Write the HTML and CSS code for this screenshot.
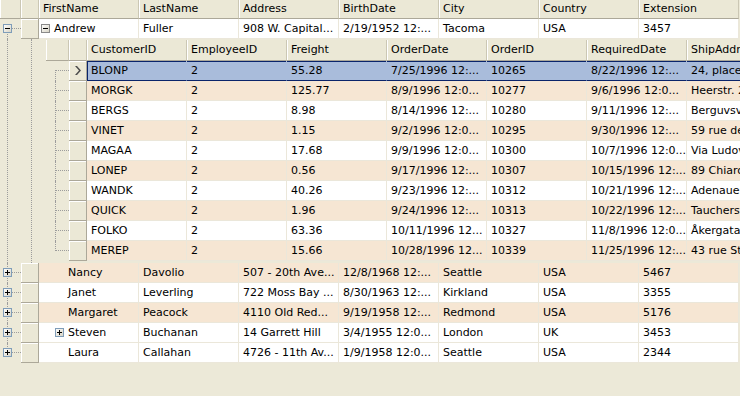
FILE: index.html
```html
<!DOCTYPE html>
<html lang="en">
<head>
    <meta charset="UTF-8">
    <title>Employees Grid</title>
    <link rel="stylesheet" href="styles.css">
</head>
<body>
    <svg class="defs" width="0" height="0">
        <defs>
            <linearGradient id="expfill" x1="0" y1="0" x2="1" y2="1">
                <stop offset="0" stop-color="#ffffff"/>
                <stop offset="1" stop-color="#d6d2c2"/>
            </linearGradient>
        </defs>
    </svg>
    <div class="grid">
        <div class="head">
            <div class="head__tree"></div>
            <div class="head__ind"></div>
            <div class="head__cell">FirstName</div>
            <div class="head__cell">LastName</div>
            <div class="head__cell">Address</div>
            <div class="head__cell">BirthDate</div>
            <div class="head__cell">City</div>
            <div class="head__cell">Country</div>
            <div class="head__cell">Extension</div>
        </div>

        <div class="row">
            <div class="tree tree--first">
                <svg class="exp" viewBox="0 0 9 9"><rect x="0.5" y="0.5" width="8" height="8" fill="url(#expfill)" stroke="#7f9db9"/><rect x="2" y="4" width="5" height="1"/></svg>
            </div>
            <div class="ind"></div>
            <div class="cell cell--name">
                <svg class="exp exp--inner" viewBox="0 0 9 9"><rect x="0.5" y="0.5" width="8" height="8" fill="url(#expfill)" stroke="#8a8a8a"/><rect x="2" y="4" width="5" height="1"/></svg>Andrew
            </div>
            <div class="cell">Fuller</div>
            <div class="cell">908 W. Capital...</div>
            <div class="cell">2/19/1952 12:...</div>
            <div class="cell">Tacoma</div>
            <div class="cell">USA</div>
            <div class="cell">3457</div>
        </div>

        <div class="detail">
            <div class="detail__gutter"></div>
            <div class="detail__body">
                <div class="head head--child">
                    <div class="head__tree head__tree--child"></div>
                    <div class="head__ind"></div>
                    <div class="head__cell">CustomerID</div>
                    <div class="head__cell">EmployeeID</div>
                    <div class="head__cell">Freight</div>
                    <div class="head__cell">OrderDate</div>
                    <div class="head__cell">OrderID</div>
                    <div class="head__cell">RequiredDate</div>
                    <div class="head__cell">ShipAddress</div>
                </div>

                <div class="row row--sel">
                    <div class="tree tree--child tree--first"></div>
                    <div class="ind">
                        <svg class="chevron" width="6" height="9" viewBox="0 0 6 9"><path d="M0 0h2l4 4.5-4 4.5h-2l4-4.5z" fill="#4c4c4c"/></svg>
                    </div>
                    <div class="cell">BLONP</div>
                    <div class="cell">2</div>
                    <div class="cell">55.28</div>
                    <div class="cell">7/25/1996 12:...</div>
                    <div class="cell">10265</div>
                    <div class="cell">8/22/1996 12:...</div>
                    <div class="cell">24, place Kléber</div>
                </div>
                <div class="row row--alt">
                    <div class="tree tree--child"></div>
                    <div class="ind"></div>
                    <div class="cell">MORGK</div>
                    <div class="cell">2</div>
                    <div class="cell">125.77</div>
                    <div class="cell">8/9/1996 12:0...</div>
                    <div class="cell">10277</div>
                    <div class="cell">9/6/1996 12:0...</div>
                    <div class="cell">Heerstr. 22</div>
                </div>
                <div class="row">
                    <div class="tree tree--child"></div>
                    <div class="ind"></div>
                    <div class="cell">BERGS</div>
                    <div class="cell">2</div>
                    <div class="cell">8.98</div>
                    <div class="cell">8/14/1996 12:...</div>
                    <div class="cell">10280</div>
                    <div class="cell">9/11/1996 12:...</div>
                    <div class="cell">Berguvsvägen 8</div>
                </div>
                <div class="row row--alt">
                    <div class="tree tree--child"></div>
                    <div class="ind"></div>
                    <div class="cell">VINET</div>
                    <div class="cell">2</div>
                    <div class="cell">1.15</div>
                    <div class="cell">9/2/1996 12:0...</div>
                    <div class="cell">10295</div>
                    <div class="cell">9/30/1996 12:...</div>
                    <div class="cell">59 rue de l'Abbaye</div>
                </div>
                <div class="row">
                    <div class="tree tree--child"></div>
                    <div class="ind"></div>
                    <div class="cell">MAGAA</div>
                    <div class="cell">2</div>
                    <div class="cell">17.68</div>
                    <div class="cell">9/9/1996 12:0...</div>
                    <div class="cell">10300</div>
                    <div class="cell">10/7/1996 12:0...</div>
                    <div class="cell">Via Ludovico il Moro 22</div>
                </div>
                <div class="row row--alt">
                    <div class="tree tree--child"></div>
                    <div class="ind"></div>
                    <div class="cell">LONEP</div>
                    <div class="cell">2</div>
                    <div class="cell">0.56</div>
                    <div class="cell">9/17/1996 12:...</div>
                    <div class="cell">10307</div>
                    <div class="cell">10/15/1996 12:...</div>
                    <div class="cell">89 Chiaroscuro Rd.</div>
                </div>
                <div class="row">
                    <div class="tree tree--child"></div>
                    <div class="ind"></div>
                    <div class="cell">WANDK</div>
                    <div class="cell">2</div>
                    <div class="cell">40.26</div>
                    <div class="cell">9/23/1996 12:...</div>
                    <div class="cell">10312</div>
                    <div class="cell">10/21/1996 12:...</div>
                    <div class="cell">Adenauerallee 900</div>
                </div>
                <div class="row row--alt">
                    <div class="tree tree--child"></div>
                    <div class="ind"></div>
                    <div class="cell">QUICK</div>
                    <div class="cell">2</div>
                    <div class="cell">1.96</div>
                    <div class="cell">9/24/1996 12:...</div>
                    <div class="cell">10313</div>
                    <div class="cell">10/22/1996 12:...</div>
                    <div class="cell">Taucherstraße 10</div>
                </div>
                <div class="row">
                    <div class="tree tree--child"></div>
                    <div class="ind"></div>
                    <div class="cell">FOLKO</div>
                    <div class="cell">2</div>
                    <div class="cell">63.36</div>
                    <div class="cell">10/11/1996 12...</div>
                    <div class="cell">10327</div>
                    <div class="cell">11/8/1996 12:0...</div>
                    <div class="cell">Åkergatan 24</div>
                </div>
                <div class="row row--alt">
                    <div class="tree tree--child tree--last"></div>
                    <div class="ind"></div>
                    <div class="cell">MEREP</div>
                    <div class="cell">2</div>
                    <div class="cell">15.66</div>
                    <div class="cell">10/28/1996 12...</div>
                    <div class="cell">10339</div>
                    <div class="cell">11/25/1996 12:...</div>
                    <div class="cell">43 rue St. Laurent</div>
                </div>
            </div>
        </div>

        <div class="row row--alt">
            <div class="tree">
                <svg class="exp" viewBox="0 0 9 9"><rect x="0.5" y="0.5" width="8" height="8" fill="url(#expfill)" stroke="#7f9db9"/><rect x="2" y="4" width="5" height="1"/><rect x="4" y="2" width="1" height="5"/></svg>
            </div>
            <div class="ind"></div>
            <div class="cell cell--name"><span class="exp exp--blank lvl1"></span>Nancy</div>
            <div class="cell">Davolio</div>
            <div class="cell">507 - 20th Ave...</div>
            <div class="cell">12/8/1968 12:...</div>
            <div class="cell">Seattle</div>
            <div class="cell">USA</div>
            <div class="cell">5467</div>
        </div>
        <div class="row">
            <div class="tree">
                <svg class="exp" viewBox="0 0 9 9"><rect x="0.5" y="0.5" width="8" height="8" fill="url(#expfill)" stroke="#7f9db9"/><rect x="2" y="4" width="5" height="1"/><rect x="4" y="2" width="1" height="5"/></svg>
            </div>
            <div class="ind"></div>
            <div class="cell cell--name"><span class="exp exp--blank lvl1"></span>Janet</div>
            <div class="cell">Leverling</div>
            <div class="cell">722 Moss Bay ...</div>
            <div class="cell">8/30/1963 12:...</div>
            <div class="cell">Kirkland</div>
            <div class="cell">USA</div>
            <div class="cell">3355</div>
        </div>
        <div class="row row--alt">
            <div class="tree">
                <svg class="exp" viewBox="0 0 9 9"><rect x="0.5" y="0.5" width="8" height="8" fill="url(#expfill)" stroke="#7f9db9"/><rect x="2" y="4" width="5" height="1"/><rect x="4" y="2" width="1" height="5"/></svg>
            </div>
            <div class="ind"></div>
            <div class="cell cell--name"><span class="exp exp--blank lvl1"></span>Margaret</div>
            <div class="cell">Peacock</div>
            <div class="cell">4110 Old Red...</div>
            <div class="cell">9/19/1958 12:...</div>
            <div class="cell">Redmond</div>
            <div class="cell">USA</div>
            <div class="cell">5176</div>
        </div>
        <div class="row">
            <div class="tree">
                <svg class="exp" viewBox="0 0 9 9"><rect x="0.5" y="0.5" width="8" height="8" fill="url(#expfill)" stroke="#7f9db9"/><rect x="2" y="4" width="5" height="1"/><rect x="4" y="2" width="1" height="5"/></svg>
            </div>
            <div class="ind"></div>
            <div class="cell cell--name">
                <svg class="exp exp--inner lvl1" viewBox="0 0 9 9"><rect x="0.5" y="0.5" width="8" height="8" fill="url(#expfill)" stroke="#7f9db9"/><rect x="2" y="4" width="5" height="1"/><rect x="4" y="2" width="1" height="5"/></svg>Steven
            </div>
            <div class="cell">Buchanan</div>
            <div class="cell">14 Garrett Hill</div>
            <div class="cell">3/4/1955 12:0...</div>
            <div class="cell">London</div>
            <div class="cell">UK</div>
            <div class="cell">3453</div>
        </div>
        <div class="row">
            <div class="tree tree--last">
                <svg class="exp" viewBox="0 0 9 9"><rect x="0.5" y="0.5" width="8" height="8" fill="url(#expfill)" stroke="#7f9db9"/><rect x="2" y="4" width="5" height="1"/><rect x="4" y="2" width="1" height="5"/></svg>
            </div>
            <div class="ind"></div>
            <div class="cell cell--name"><span class="exp exp--blank lvl1"></span>Laura</div>
            <div class="cell">Callahan</div>
            <div class="cell">4726 - 11th Av...</div>
            <div class="cell">1/9/1958 12:0...</div>
            <div class="cell">Seattle</div>
            <div class="cell">USA</div>
            <div class="cell">2344</div>
        </div>
    </div>
</body>
</html>
```

FILE: styles.css
```css
* {
    margin: 0;
    padding: 0;
    box-sizing: border-box;
}

body {
    background-color: #ece9d8;
    font-family: "DejaVu Sans", Verdana, sans-serif;
    font-size: 11px;
    color: #000;
}

.defs {
    position: absolute;
}

.grid {
    width: 740px;
    height: 396px;
    overflow: hidden;
}

/* header rows */
.head {
    display: flex;
    height: 19px;
}

.head--child {
    height: 21px;
}

.head__tree,
.head__ind,
.head__cell {
    flex: 0 0 auto;
    background-color: #ebe8d6;
    border-right: 1px solid #cbc7b4;
    border-bottom: 1px solid #aca899;
    box-shadow: inset 1px 0 #fff;
}

.head__tree {
    width: 21px;
}

.head__tree--child {
    width: 23px;
}

.head__ind {
    width: 18px;
}

.head__cell {
    width: 100px;
    padding: 0 4px;
    line-height: 18px;
    white-space: nowrap;
    overflow: hidden;
}

.head--child .head__cell {
    line-height: 20px;
}

/* data rows */
.row {
    display: flex;
    height: 20px;
}

.cell {
    flex: 0 0 100px;
    width: 100px;
    padding: 0 4px;
    line-height: 19px;
    background-color: #fff;
    border-right: 1px solid #ebe7da;
    border-bottom: 1px solid #ebe7da;
    white-space: nowrap;
    overflow: hidden;
}

.row--alt .cell {
    background-color: #f6e6d3;
}

.row--sel .cell {
    background-color: #a9bcdb;
    border-right-color: #a9bcdb;
    border-bottom-color: #0a246a;
    box-shadow: inset 0 1px #0a246a;
}

.row--sel .ind + .cell {
    box-shadow: inset 0 1px #0a246a, inset 1px 0 #0a246a;
}

.cell--name {
    display: flex;
    align-items: center;
    padding-left: 2px;
}

.ind {
    flex: 0 0 18px;
    display: flex;
    align-items: center;
    justify-content: center;
    background-color: #ebe8d6;
    border-right: 1px solid #aca899;
    border-bottom: 1px solid #aca899;
    box-shadow: inset 1px 1px #fff;
}

.chevron {
    display: block;
    margin-left: 1px;
}

/* tree connectors */
.tree {
    flex: 0 0 21px;
    position: relative;
    padding: 5px 0 0 3px;
}

.tree::before {
    content: '';
    position: absolute;
    left: 7px;
    top: 0;
    bottom: 0;
    border-left: 1px dotted #9c9c9c;
}

.tree::after {
    content: '';
    position: absolute;
    left: 8px;
    top: 9px;
    width: 13px;
    border-top: 1px dotted #9c9c9c;
}

.tree--first::before {
    top: 9px;
}

.tree--last::before {
    bottom: auto;
    height: 10px;
}

.tree--child {
    flex-basis: 23px;
}

.tree--child::before {
    left: 9px;
}

.tree--child::after {
    left: 10px;
    width: 13px;
}

.exp {
    display: block;
    position: relative;
    z-index: 1;
    flex: 0 0 9px;
    width: 9px;
    height: 9px;
    fill: #000;
}

.exp--inner,
.exp--blank {
    margin-right: 4px;
}

.lvl1 {
    margin-left: 14px;
}

/* expanded child grid */
.detail {
    display: flex;
}

.detail__gutter {
    flex: 0 0 46px;
    position: relative;
}

.detail__gutter::before,
.detail__gutter::after {
    content: '';
    position: absolute;
    top: 0;
    bottom: 0;
    border-left: 1px dotted #9c9c9c;
}

.detail__gutter::before {
    left: 7px;
}

.detail__gutter::after {
    left: 31px;
}

.detail__body {
    padding: 1px 0 2px;
}
```
